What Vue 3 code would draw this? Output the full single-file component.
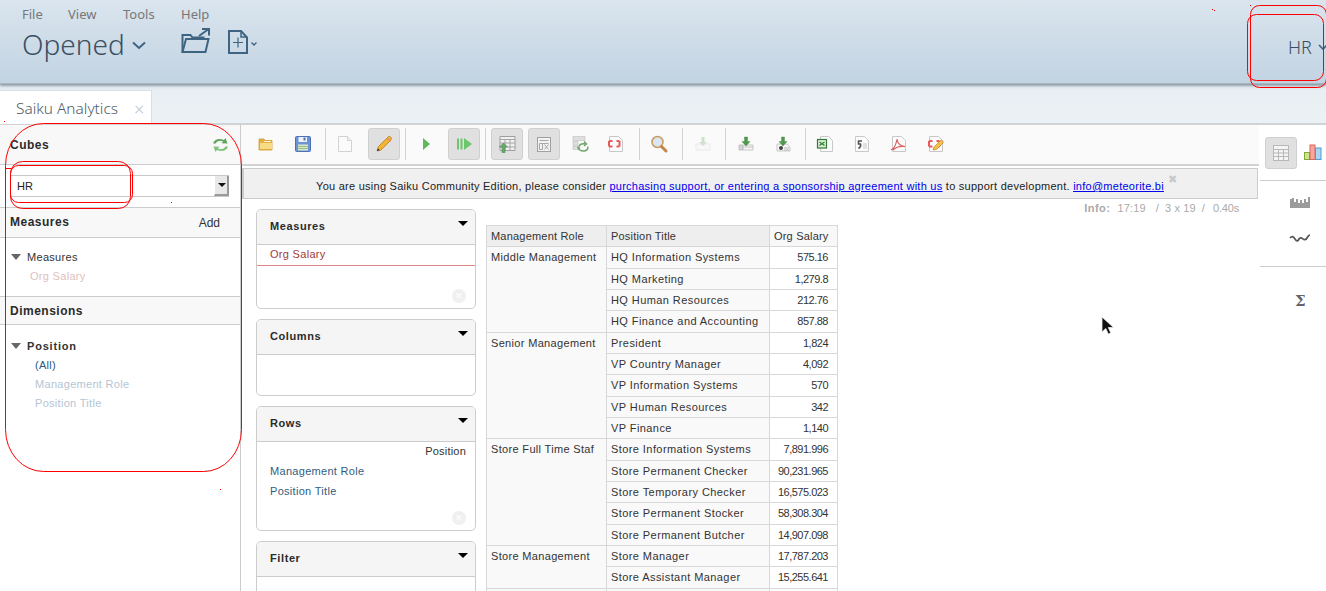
<script setup>
const toolbar = [
  { id: 'open', ml: 0 }, { id: 'save', ml: 5 }, { sep: 1, ml: 6 },
  { id: 'new', ml: 3 }, { id: 'edit', ml: 7, on: 1 }, { sep: 1, ml: 5 },
  { id: 'play', ml: 4 }, { id: 'run', ml: 6, on: 1 }, { sep: 1, ml: 5 },
  { id: 'table', ml: 5, on: 1 }, { id: 'nonempty', ml: 5, on: 1 }, { id: 'swap', ml: 4 }, { id: 'mdx', ml: 4 }, { sep: 1, ml: 7 },
  { id: 'zoom', ml: 3 }, { sep: 1, ml: 7 },
  { id: 'drill', ml: 4 }, { sep: 1, ml: 6 },
  { id: 'dl1', ml: 4 }, { id: 'dl2', ml: 5 }, { sep: 1, ml: 6 },
  { id: 'xls', ml: 3 }, { id: 'csv', ml: 5 }, { id: 'pdf', ml: 5 }, { id: 'mdxedit', ml: 5 }
]
const groups = [
  { role: 'Middle Management', rows: [['HQ Information Systems', '575.16'], ['HQ Marketing', '1,279.8'], ['HQ Human Resources', '212.76'], ['HQ Finance and Accounting', '857.88']] },
  { role: 'Senior Management', rows: [['President', '1,824'], ['VP Country Manager', '4,092'], ['VP Information Systems', '570'], ['VP Human Resources', '342'], ['VP Finance', '1,140']] },
  { role: 'Store Full Time Staf', rows: [['Store Information Systems', '7,891.996'], ['Store Permanent Checker', '90,231.965'], ['Store Temporary Checker', '16,575.023'], ['Store Permanent Stocker', '58,308.304'], ['Store Permanent Butcher', '14,907.098']] },
  { role: 'Store Management', rows: [['Store Manager', '17,787.203'], ['Store Assistant Manager', '15,255.641']] }
]
</script>

<template>
  <div class="page">
    <header class="top">
      <div class="top-left">
        <nav class="menu"><span>File</span><span>View</span><span>Tools</span><span>Help</span></nav>
        <div class="title-row">
          <span class="opened">Opened</span>
          <svg class="chev" width="14" height="9" viewBox="0 0 14 9"><path d="M1 1.500 7 7l6-5.500" fill="none" stroke="#3e6482" stroke-width="2"/></svg>
          <svg class="folder" width="29" height="26" viewBox="0 0 29 26" fill="none" stroke="#3e6482" stroke-width="2"><path d="M1.500 24V7h8l2 2.500h12"/><path d="M1.500 24h23L27.500 11H5z"/><path d="M18 8 27 1.500M21 1h7v6.500" stroke-width="2"/></svg>
          <svg class="newdoc" width="21" height="24" viewBox="0 0 21 24" fill="none" stroke="#3e6482" stroke-width="2"><path d="M1 1h12l6 6.500V23H1z"/><path d="M13 1v6h6" stroke-width="1.500"/><path d="M10 7.500v10M5 12.500h10" stroke-width="1.200"/></svg>
          <svg class="minichev" width="6" height="4" viewBox="0 0 6 4"><path d="M.5.500 3 3 5.500.500" fill="none" stroke="#3e6482" stroke-width="1.300"/></svg>
        </div>
      </div>
      <div class="user">HR
        <svg width="10" height="7" viewBox="0 0 10 7"><path d="M1 1l4 4 4-4" fill="none" stroke="#3e6482" stroke-width="1.600"/></svg>
      </div>
    </header>

    <div class="tabs">
      <div class="tab">Saiku Analytics<span class="tab-x">×</span></div>
    </div>

    <main class="main">
      <aside class="side">
        <div class="side-head cubes">
          <b>Cubes</b>
          <svg width="17" height="16" viewBox="0 0 17 16"><path d="M1 6.500C2 2.500 7 .500 12 3l1.500-2 2 5.500-6-.200 1.700-1.800C8 3 5 3.700 3.800 6.500z" fill="#5ea658"/><path d="M16 9.500c-1 4-6 6-11 3.500l-1.500 2-2-5.500 6 .200L5.800 11.500c3.200 1.500 6.200.800 7.400-2z" fill="#7fc27a"/></svg>
        </div>
        <div class="cube-select">
          <div class="select">HR<span class="sel-btn"><i></i></span></div>
        </div>
        <div class="side-head measures">
          <b>Measures</b><span class="add">Add</span>
        </div>
        <div class="tree t-measures">
          <div class="node"><i class="tri"></i>Measures</div>
          <div class="leaf pink">Org Salary</div>
        </div>
        <div class="side-head dims"><b>Dimensions</b></div>
        <div class="tree t-dims">
          <div class="node strong"><i class="tri"></i>Position</div>
          <div class="leaf all">(All)</div>
          <div class="leaf blue">Management Role</div>
          <div class="leaf blue">Position Title</div>
        </div>
      </aside>

      <section class="center">
        <div class="toolbar">
          <template v-for="(t, i) in toolbar" :key="i">
            <span v-if="t.sep" class="sep" :style="{ marginLeft: t.ml + 'px' }"></span>
            <span v-else class="btn" :class="{ on: t.on }" :style="{ marginLeft: t.ml + 'px' }">
              <svg width="20" height="20" viewBox="0 0 20 20">
                <g v-if="t.id === 'open'"><path d="M3 5h5l1 1.500h7V16H3z" fill="#e3b14a" stroke="#d49b32" stroke-width=".8"/><path d="M4 9h12v6H4z" fill="#f8dc85"/><path d="M8 7.500h7" stroke="#fff3c4"/></g>
                <g v-else-if="t.id === 'save'"><rect x="2.500" y="2.500" width="15" height="15" rx="1" fill="#6d93d3" stroke="#4a72b8"/><rect x="5.500" y="3" width="8.500" height="5" fill="#eef3fb"/><rect x="10.500" y="3.500" width="2" height="3" fill="#4a72b8"/><rect x="5" y="10.500" width="10" height="6" fill="#d8e7c9"/><path d="M5 12.500h10M5 14.500h10" stroke="#8bb37a" stroke-width=".8"/></g>
                <g v-else-if="t.id === 'new'"><path d="M3.500 2.500h9l4 4v11h-13z" fill="#fbfbfb" stroke="#d2d2d2"/><path d="M12.500 2.500v4h4" fill="#eee" stroke="#d2d2d2"/></g>
                <g v-else-if="t.id === 'edit'"><path d="M3 17 4.500 12.500 14 3c1-1 2.500-.500 3 .500s.500 2-.500 3L7 16z" fill="#f2b632" stroke="#b5791a" stroke-width=".8"/><path d="M13 4l3.500 3.500" stroke="#e38a7c" stroke-width="1.500"/><path d="M3 17l.800-2.800 2 2z" fill="#4a3a22"/></g>
                <g v-else-if="t.id === 'play'"><path d="M7 4v12l7-6z" fill="#5fb85a"/></g>
                <g v-else-if="t.id === 'run'"><path d="M3 4.500h2v11H3zM6.500 4.500h2v11h-2zM10 4v12l8-6z" fill="#6dc66a"/></g>
                <g v-else-if="t.id === 'table'"><path d="M3 2.500h15v14H3z" fill="#f1f1f1" stroke="#9e9e9e"/><path d="M3 5.500h15M3 9h15M3 13h15M8 5.500v11M13 5.500v11" stroke="#a5a5a5" fill="none"/><path d="M6.500 9 2.500 13H5v5.500h3V13h2.500z" fill="#67a86c" stroke="#4d8a55" stroke-width=".6"/></g>
                <g v-else-if="t.id === 'nonempty'"><rect x="3.500" y="3.500" width="13" height="14" fill="#f2f2f2" stroke="#a0a0a0"/><path d="M5.500 6.500h9M5.500 9.500h9M5.500 9.500v6h3v-6M10.500 10.500l4 5M14.500 10.500l-4 5" stroke="#a8a8a8" fill="none"/></g>
                <g v-else-if="t.id === 'swap'"><path d="M3 2.500h12v4H3zM3 7.500h5v4H3zM3 12.500h5v3H3z" fill="#dfdfdf" stroke="#bdbdbd" stroke-width=".6"/><path d="M8 14c1 2 3 3 5.500 3 2.500 0 4.500-1.500 4.500-4.500M9 12.500c1-2.500 3.500-3 6-2.500M14 7.500 16.500 10 14 12M10 14.500 7.500 13" fill="none" stroke="#6fa56b" stroke-width="1.500"/></g>
                <g v-else-if="t.id === 'mdx' || t.id === 'mdxedit'">
                  <path d="M3.500 2.500h9l4 4v11h-13z" fill="#fbfbfb" stroke="#c8c8c8"/>
                  <path d="M3 7h3.500M3 7v5.500M3 12.500h3.500M13.500 7h-3M13.500 7v5.500M13.500 12.500h-3" stroke="#e65c5c" stroke-width="2" fill="none"/>
                  <g v-if="t.id === 'mdxedit'"><path d="M7 16l1-3 6.500-6.500c1-1 3.500 1 2.500 2.500L10.500 15.500z" fill="#f2c14a" stroke="#b5791a" stroke-width=".6"/></g>
                </g>
                <g v-else-if="t.id === 'zoom'"><circle cx="8.500" cy="8" r="5.500" fill="#dbe6f3" stroke="#c99b5f" stroke-width="1.500"/><path d="M12.500 12.500 17 17" stroke="#c58645" stroke-width="3" stroke-linecap="round"/></g>
                <g v-else-if="t.id === 'drill'"><path d="M3 10h14v6H3z" fill="#f8f8f8" stroke="#eaeaea"/><path d="M8.500 3h3v5h2.500L10 12 6 8h2.500z" fill="#cfe2cb"/></g>
                <g v-else-if="t.id === 'dl1'"><path d="M3 11h4v5H3z" fill="#d8d8d8" stroke="#aaa" stroke-width=".6"/><path d="M7 11h10v5H7zM7 13h10" fill="#f5f5f5" stroke="#bbb" stroke-width=".8"/><path d="M8.500 3h3v4.500h2.500L10 12 6 7.500h2.500z" fill="#4e9a4a" stroke="#3d8439" stroke-width=".4"/></g>
                <g v-else-if="t.id === 'dl2'"><path d="M4 10h10l3 3v4H4z" fill="#f7f7f7" stroke="#bbb" stroke-width=".8"/><circle cx="8" cy="14" r="2" fill="#444"/><path d="M11 14h5M11 16h5" stroke="#bbb"/><path d="M8.500 3h3v4.500h2.500L10 12 6 7.500h2.500z" fill="#4e9a4a" stroke="#3d8439" stroke-width=".4"/></g>
                <g v-else-if="t.id === 'xls'"><path d="M5.500 2.500h8l4 4v11h-12z" fill="#fbfbfb" stroke="#c8c8c8"/><rect x="2.500" y="5.500" width="9" height="8.500" fill="#dcecd8" stroke="#2f7d32" stroke-width="1.200"/><path d="M4.500 8l5 3.500M9.500 8l-5 3.500" stroke="#2f7d32" stroke-width="1.200"/></g>
                <g v-else-if="t.id === 'csv'"><path d="M3.500 2.500h9l4 4v11h-13z" fill="#fbfbfb" stroke="#c8c8c8"/><path d="M10 7H6.500v3h2c.500 1.500-.500 3.500-2 4.500" fill="none" stroke="#555" stroke-width="1.600"/><path d="M11 10h4M11 12h4M11 14h4" stroke="#c8c8c8"/></g>
                <g v-else-if="t.id === 'pdf'"><path d="M3.500 2.500h9l4 4v11h-13z" fill="#fbfbfb" stroke="#c8c8c8"/><path d="M2 16c3-1 5-5 6-11 .500 4 3 7 8 7.500-4-.500-9 .500-12 3.500" fill="none" stroke="#dd5f5f" stroke-width="1.200"/></g>
              </svg>
            </span>
          </template>
        </div>
        <div class="notice">
          You are using Saiku Community Edition, please consider <a>purchasing support, or entering a sponsorship agreement with us</a> to support development. <a>info@meteorite.bi</a>
          <span class="notice-x">✖</span>
        </div>
        <div class="info"><b>Info:</b><span class="i-time">17:19</span><span class="i-slash">/</span><span class="i-rest">3 x 19</span><span class="i-rest">/</span><span class="i-last">0.40s</span></div>

        <div class="workspace">
          <div class="drops">
            <div class="drop d-measures">
              <div class="drop-head">Measures<i class="drop-tri"></i></div>
              <div class="chip">Org Salary</div>
              <span class="clear">✕</span>
            </div>
            <div class="drop d-columns">
              <div class="drop-head">Columns<i class="drop-tri"></i></div>
            </div>
            <div class="drop d-rows">
              <div class="drop-head">Rows<i class="drop-tri"></i></div>
              <div class="dim-name">Position</div>
              <div class="lvl">Management Role</div>
              <div class="lvl">Position Title</div>
              <span class="clear">✕</span>
            </div>
            <div class="drop d-filter">
              <div class="drop-head">Filter<i class="drop-tri"></i></div>
            </div>
          </div>

          <table class="result">
            <thead>
              <tr><th>Management Role</th><th>Position Title</th><th>Org Salary</th></tr>
            </thead>
            <tbody v-for="g in groups" :key="g.role">
              <tr v-for="(r, i) in g.rows" :key="r[0]">
                <td v-if="i === 0" class="role" :rowspan="g.rows.length">{{ g.role }}</td>
                <td class="pos">{{ r[0] }}</td>
                <td class="num">{{ r[1] }}</td>
              </tr>
            </tbody>
            <tbody><tr><td class="role"></td><td class="pos"></td><td class="num"></td></tr></tbody>
          </table>
        </div>
      </section>

      <aside class="right">
        <div class="r-top">
          <span class="btn on rb">
            <svg width="20" height="20" viewBox="0 0 20 20"><rect x="2.500" y="2.500" width="15" height="15" fill="#f4f4f4" stroke="#b8b8b8"/><path d="M2.500 6.500h15M2.500 10h15M2.500 13.500h15M7.500 6.500v11M12.500 6.500v11" stroke="#b8b8b8" fill="none"/></svg>
          </span>
          <svg class="bars" width="18" height="16" viewBox="0 0 18 16"><rect x=".5" y="8.500" width="5" height="7" fill="#cfe38a" stroke="#7fa83a"/><rect x="6" y="1" width="5" height="14.500" fill="#f4a9a0" stroke="#d8675c"/><rect x="11.500" y="4" width="5.500" height="11.500" fill="#a9d6f2" stroke="#4c9fd4"/></svg>
        </div>
        <div class="r-mid">
          <svg width="20" height="12" viewBox="0 0 20 12"><path d="M1 3v9M3 2v10M5 6v6M7 3v9M9 7v5M11 4v8M13 7v5M15 3v9M17 6v6M19 1v11" stroke="#666" stroke-width="1.300"/></svg>
          <svg width="22" height="10" viewBox="0 0 22 10"><path d="M1 5c2-2 3-2 5 1s3 2 4 0 3-1 4 0 3 1 4-1 2-3 3-3" fill="none" stroke="#555" stroke-width="1.700"/></svg>
        </div>
        <div class="r-sum">Σ</div>
      </aside>
    </main>

    <svg class="marks" width="1326" height="591" viewBox="0 0 1326 591" fill="none" stroke="#ff0000">
      <rect x="5.500" y="123.500" width="236" height="348" rx="38" ry="42"/>
      <rect x="10.500" y="161.500" width="120" height="47" rx="12"/>
      <rect x="10.500" y="165.500" width="122" height="37" rx="8"/>
      <path d="M5 168.500h6"/>
      <rect x="1250.500" y="5.500" width="76" height="82" rx="9"/>
      <rect x="1247.500" y="14.500" width="76" height="66" rx="9"/>
      <g fill="#ff0000" stroke="none">
        <rect x="4" y="121" width="1" height="1"/><rect x="1212" y="9" width="1" height="1"/><rect x="1214" y="10" width="1" height="1"/>
        <rect x="1250" y="5" width="1" height="1"/><rect x="220" y="489" width="1" height="1"/><rect x="171" y="202" width="1" height="1"/>
      </g>
    </svg>
    <svg class="cursor" width="14" height="20" viewBox="0 0 14 20"><path d="M1 1v15l3.800-3.500 2.500 5.500 2.500-1-2.500-5.500H12.500z" fill="#111" stroke="#eee" stroke-width=".8"/></svg>
  </div>
</template>

<style>
html, body { margin: 0; overflow: hidden; background: #fff; }
</style>

<style scoped>
.page { position: relative; width: 1326px; height: 591px; overflow: hidden; font-family: "Liberation Sans", Arial, sans-serif; font-size: 11px; color: #333; display: flex; flex-direction: column; background: #fff; }

.top { height: 83px; flex: none; display: flex; justify-content: space-between; background: linear-gradient(#dae5ee, #c2d3e2); box-shadow: 0 1px 2px #8a9aa6, 0 2px 3px rgba(100,120,135,.5); position: relative; z-index: 1; border-bottom: 1px solid #a9b6c0; font-family: "Noto Sans", "Open Sans", sans-serif; }
.top-left { padding: 6px 0 0 22px; }
.menu { display: flex; font-size: 13px; color: #777; line-height: 17px; }
.menu span:nth-child(1) { width: 46px; }
.menu span:nth-child(2) { width: 55px; }
.menu span:nth-child(3) { width: 58px; }
.title-row { display: flex; align-items: center; height: 40px; margin-top: 1px; }
.opened { font-size: 28px; font-weight: 300; color: #3a4f63; line-height: 38px; width: 110px; }
.chev { margin-top: 2px; }
.folder { margin: -7px 0 0 35px; }
.newdoc { margin: -4px 0 0 18px; }
.minichev { margin: 0 0 0 2px; }
.user { font-size: 18px; font-weight: 300; color: #3a4f63; padding: 34px 0 0 0; width: 38px; line-height: 26px; white-space: nowrap; }
.user svg { margin: 0 0 3px 1px; }

.tabs { height: 40px; flex: none; background: linear-gradient(#e8eef3, #ecf1f5); border-bottom: 1px solid #c9d6e0; box-sizing: border-box; display: flex; align-items: flex-end; padding-top: 5px; }
.tab { width: 152px; height: 34px; box-sizing: border-box; background: #fff; border: 1px solid #d5e0e8; border-width: 1px 1px 0 0; font-family: "Noto Sans", "Open Sans", sans-serif; font-weight: 300; font-size: 15.4px; color: #4f5b66; padding-left: 16px; line-height: 36px; display: flex; margin-bottom: -1px; }
.tab-x { font-size: 18px; color: #b9c8d3; margin-left: 16px; }

.main { flex: 1; display: flex; min-height: 0; border-top: 1px solid #d2d2d2; }
.side { width: 241px; flex: none; border-right: 1px solid #ccc; box-sizing: border-box; }
.side-head { display: flex; align-items: center; justify-content: space-between; padding: 0 10px; background: #f8f8f8; border-bottom: 1px solid #ccc; box-sizing: border-box; font-size: 12px; letter-spacing: .5px; }
.side-head b { color: #2b2b2b; }
.cubes { height: 40px; }
.cubes svg { margin-right: 1px; }
.cube-select { height: 43px; box-sizing: border-box; padding-top: 10px; padding-left: 10px; background: #fff; border-bottom: 1px solid #ccc; }
.select { width: 219px; height: 22px; box-sizing: border-box; border: 1px solid #c8c8c8; line-height: 20px; padding-left: 6px; font-size: 11px; color: #222; position: relative; }
.sel-btn { position: absolute; right: -1px; top: 0; width: 15px; height: 20px; background: #e8e8e8; border-right: 2px solid #999; border-bottom: 2px solid #999; box-sizing: border-box; border-left: 1px solid #fff; }
.sel-btn i { position: absolute; left: 3px; top: 7px; border: 4px solid transparent; border-top: 4px solid #111; border-bottom: 0; }
.measures { height: 30px; padding-bottom: 1px; }
.add { font-size: 12px; letter-spacing: 0; color: #333; margin-right: 10px; margin-top: 2px; }
.tree { background: #fff; padding-left: 11px; box-sizing: border-box; }
.t-measures { height: 59px; padding-top: 12px; border-bottom: 1px solid #ccc; }
.node { display: flex; align-items: center; height: 14px; letter-spacing: .3px; color: #333; }
.node.strong { font-weight: bold; letter-spacing: .8px; }
.tri { width: 0; height: 0; border: 5px solid transparent; border-top: 6px solid #666; border-bottom: 0; margin-right: 6px; }
.leaf { padding-left: 19px; height: 19px; line-height: 19px; letter-spacing: .3px; }
.t-measures .leaf { margin-top: 3px; }
.t-dims .leaf { padding-left: 24px; }
.pink { color: #e0c0c0; }
.blue { color: #b4c5d3; }
.all { color: #2a5a80; margin-top: 3px; }
.dims { height: 28px; }
.t-dims { padding-top: 14px; }

.center { width: 1018px; flex: none; display: flex; flex-direction: column; min-width: 0; }
.toolbar { height: 41px; flex: none; box-sizing: border-box; display: flex; align-items: center; padding: 0 0 1px 9px; background: #fafafa; border-bottom: 2px solid #d2d2d2; }
.btn { width: 32px; height: 32px; box-sizing: border-box; flex: none; display: flex; align-items: center; justify-content: center; border-radius: 3px; border: 1px solid transparent; }
.btn.on { background: #e0e0e0; border-color: #cfcfcf; }
.sep { width: 1px; height: 32px; background: #d2d2d2; flex: none; }
.notice { height: 31px; margin: 2px 1px 0; flex: none; box-sizing: border-box; background: #f0f0f0; border: 1px solid #ccc; border-width: 1px 1px 1px 2px; text-align: center; line-height: 35px; font-size: 11px; letter-spacing: .26px; color: #222; position: relative; white-space: nowrap; padding-right: 21px; }
.notice a { color: #00e; text-decoration: underline; }
.notice-x { position: absolute; left: 924px; top: -7px; color: #c8c8c8; font-size: 11px; }
.info { height: 10px; flex: none; text-align: right; padding-right: 20px; color: #aaa; line-height: 18px; font-size: 11px; letter-spacing: .15px; }
.info b { letter-spacing: .5px; }
.i-time { margin-left: 7px; }
.i-slash { margin-left: 10px; }
.i-rest { margin-left: 6px; }
.i-last { margin-left: 8px; letter-spacing: -.2px; }
.workspace { display: flex; padding: 0 0 0 15px; align-items: flex-start; flex: 1; min-height: 0; }
.drops { width: 220px; flex: none; display: flex; flex-direction: column; gap: 10px; }
.drop { box-sizing: border-box; border: 1px solid #ccc; border-radius: 5px; position: relative; background: #fff; overflow: hidden; }
.d-measures { height: 100px; }
.d-columns { height: 77px; }
.d-rows { height: 125px; }
.d-filter { height: 100px; }
.drop-head { height: 35px; box-sizing: border-box; background: #f5f5f5; border-bottom: 1px solid #ccc; font-weight: bold; font-size: 11px; letter-spacing: .6px; color: #2b2b2b; padding-left: 13px; line-height: 32px; position: relative; }
.drop-tri { position: absolute; right: 7px; top: 11px; border: 5px solid transparent; border-top: 5px solid #000; border-bottom: 0; }
.chip { height: 21px; box-sizing: border-box; border-bottom: 1px solid #e08585; color: #a33a3a; padding-left: 13px; line-height: 18px; letter-spacing: .3px; }
.clear { position: absolute; right: 9px; bottom: 5px; width: 14px; height: 14px; border-radius: 50%; background: #f0f0f0; color: #fff; font-size: 9px; line-height: 14px; text-align: center; }
.dim-name { text-align: right; padding: 2px 9px 0 0; line-height: 14px; letter-spacing: .2px; color: #333; }
.lvl { padding-left: 13px; color: #2f5d80; line-height: 20px; letter-spacing: .3px; }
.dim-name + .lvl { margin-top: 3px; }

.result { border-collapse: collapse; margin: 16px 0 0 10px; font-size: 11px; letter-spacing: .33px; color: #333; table-layout: fixed; width: 352px; flex: none; }
.result th:nth-child(1) { width: 120px; }
.result th:nth-child(2) { width: 163px; }
.result th, .result td { border: 1px solid #d8d8d8; padding: 0 4px; height: 21.330px; box-sizing: border-box; white-space: nowrap; overflow: hidden; text-align: left; font-weight: normal; }
.result th { background: #eee; letter-spacing: .2px; }
.result th:last-child { background: #f8f8f8; }
.role { vertical-align: top; background: #f9f9f9; line-height: 21px; }
.pos { background: #f9f9f9; letter-spacing: .42px; }
.num { text-align: right !important; padding-right: 9px !important; background: #fff; letter-spacing: -.5px; }

.right { flex: 1; min-width: 0; background: #fff; }
.r-top { height: 56px; box-sizing: border-box; padding: 12px 0 0 5px; border-bottom: 1px solid #ccc; margin-left: 1px; display: flex; align-items: flex-start; }
.rb { width: 32px; }
.bars { margin: 7px 0 0 7px; }
.r-mid { height: 86px; box-sizing: border-box; border-bottom: 1px solid #ccc; margin-left: 1px; display: flex; flex-direction: column; align-items: center; gap: 25px; padding: 15px 4px 0 18px; }
.r-sum { padding: 24px 0 0 36px; font-size: 15px; font-weight: bold; color: #666; font-family: "DejaVu Serif", serif; line-height: 20px; }

.marks { position: absolute; left: 0; top: 0; pointer-events: none; z-index: 5; }
.cursor { position: absolute; left: 1101px; top: 316px; z-index: 6; }
</style>
